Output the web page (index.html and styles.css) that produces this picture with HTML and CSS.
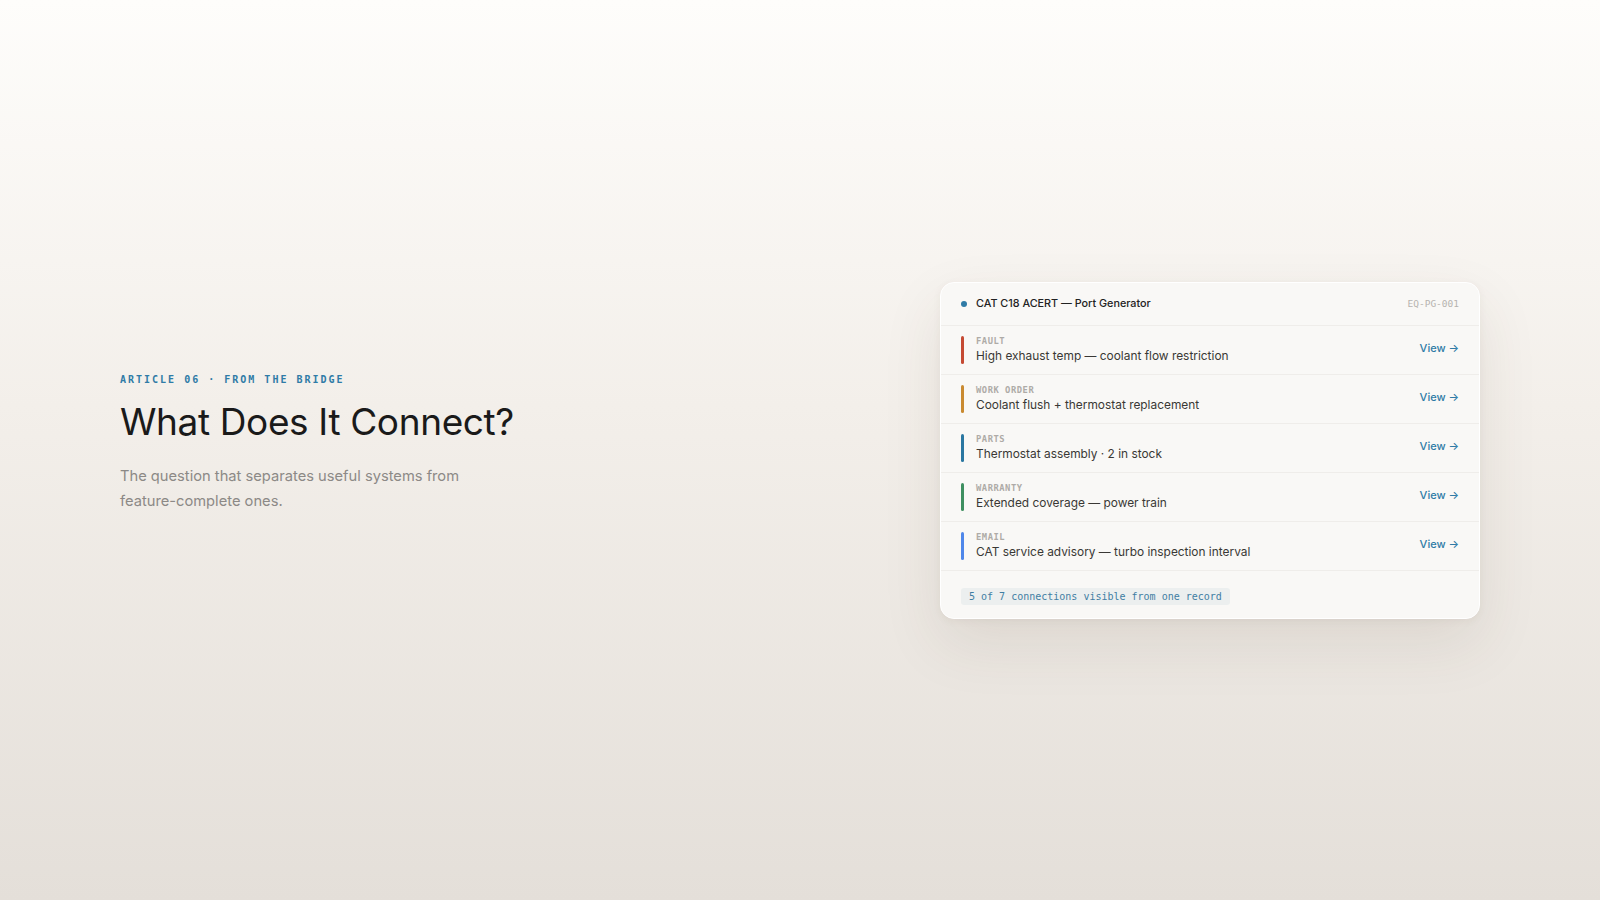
FILE: index.html
```html
<!DOCTYPE html>
<html lang="en">
<head>
  <meta charset="UTF-8">
  <title>What Does It Connect?</title>
  <link rel="stylesheet" href="styles.css">
</head>
<body>
  <main class="page">
    <section class="intro">
      <p class="eyebrow">ARTICLE 06 · FROM THE BRIDGE</p>
      <h1>What Does It Connect?</h1>
      <p class="lede">The question that separates useful systems from feature-complete ones.</p>
    </section>

    <section class="card">
      <header class="card-head">
        <span class="dot"></span>
        <span class="asset">CAT C18 ACERT — Port Generator</span>
        <span class="asset-id">EQ-PG-001</span>
      </header>

      <div class="row">
        <span class="bar fault"></span>
        <div class="row-body">
          <span class="kind">FAULT</span>
          <span class="desc">High exhaust temp — coolant flow restriction</span>
        </div>
        <a class="view" href="#">View →</a>
      </div>
      <div class="row">
        <span class="bar work"></span>
        <div class="row-body">
          <span class="kind">WORK ORDER</span>
          <span class="desc">Coolant flush + thermostat replacement</span>
        </div>
        <a class="view" href="#">View →</a>
      </div>
      <div class="row">
        <span class="bar parts"></span>
        <div class="row-body">
          <span class="kind">PARTS</span>
          <span class="desc">Thermostat assembly · 2 in stock</span>
        </div>
        <a class="view" href="#">View →</a>
      </div>
      <div class="row">
        <span class="bar warranty"></span>
        <div class="row-body">
          <span class="kind">WARRANTY</span>
          <span class="desc">Extended coverage — power train</span>
        </div>
        <a class="view" href="#">View →</a>
      </div>
      <div class="row">
        <span class="bar email"></span>
        <div class="row-body">
          <span class="kind">EMAIL</span>
          <span class="desc">CAT service advisory — turbo inspection interval</span>
        </div>
        <a class="view" href="#">View →</a>
      </div>

      <footer class="card-foot">
        <span class="pill">5 of 7 connections visible from one record</span>
      </footer>
    </section>
  </main>
</body>
</html>
```

FILE: styles.css
```css
html, body {
  margin: 0;
  height: 100%;
}
body {
  font-family: Inter, "Noto Sans", sans-serif;
  background: linear-gradient(180deg, #fefdfb 0%, #f3efea 45%, #e4dfd9 100%);
  color: #1c1c1c;
}
.page {
  height: 900px;
  box-sizing: border-box;
  padding: 0 120px;
  display: flex;
  align-items: center;
  justify-content: space-between;
}
.intro {
  width: 420px;
  margin-top: -12px;
}
.eyebrow {
  margin: 0 0 14px;
  font-family: "DejaVu Sans Mono", monospace;
  font-size: 10px;
  font-weight: bold;
  letter-spacing: 0.2em;
  color: #2f7ba6;
}
h1 {
  margin: 0;
  font-size: 37px;
  font-weight: 400;
  letter-spacing: -0.01em;
  color: #1a1a1a;
}
.lede {
  margin: 20px 0 0;
  width: 370px;
  font-size: 14.7px;
  line-height: 25px;
  color: #8c8986;
}
.card {
  width: 540px;
  box-sizing: border-box;
  background: #f9f8f6;
  border: 1px solid #ffffff;
  border-radius: 14px;
  box-shadow: 0 24px 60px rgba(80, 60, 40, 0.10), 0 2px 8px rgba(80, 60, 40, 0.05);
}
.card-head {
  display: flex;
  align-items: center;
  padding: 0 20px;
  height: 42px;
  border-bottom: 1px solid #efedea;
}
.dot {
  width: 6px;
  height: 6px;
  border-radius: 50%;
  background: #2f7ba6;
  margin-right: 9px;
}
.asset {
  flex: 1;
  font-size: 10.8px;
  font-weight: 500;
  color: #222;
}
.asset-id {
  font-family: "DejaVu Sans Mono", monospace;
  font-size: 9.5px;
  color: #b6b3af;
}
.row {
  display: flex;
  align-items: center;
  padding: 10px 20px;
  height: 28px;
  border-bottom: 1px solid #efedea;
}
.bar {
  width: 3px;
  height: 28px;
  border-radius: 2px;
  margin-right: 12px;
}
.bar.fault { background: #c54a33; }
.bar.work { background: #c98a30; }
.bar.parts { background: #2a77a1; }
.bar.warranty { background: #3e8f60; }
.bar.email { background: #4f87ea; }
.row-body {
  flex: 1;
  display: flex;
  flex-direction: column;
}
.kind {
  font-family: "DejaVu Sans Mono", monospace;
  font-size: 8.8px;
  font-weight: bold;
  letter-spacing: 0.06em;
  color: #aeaba7;
  line-height: 11px;
}
.desc {
  font-size: 11.9px;
  color: #3a3835;
  line-height: 17px;
}
.view {
  font-size: 11px;
  font-weight: 500;
  color: #2f7ba6;
  text-decoration: none;
  margin-bottom: 4px;
}
.card-foot {
  display: flex;
  padding: 17px 20px 13px;
}
.pill {
  font-family: "DejaVu Sans Mono", monospace;
  font-size: 10px;
  line-height: 17px;
  padding: 0 8px;
  border-radius: 3px;
  background: #ecefef;
  color: #3f7ea3;
}
```
